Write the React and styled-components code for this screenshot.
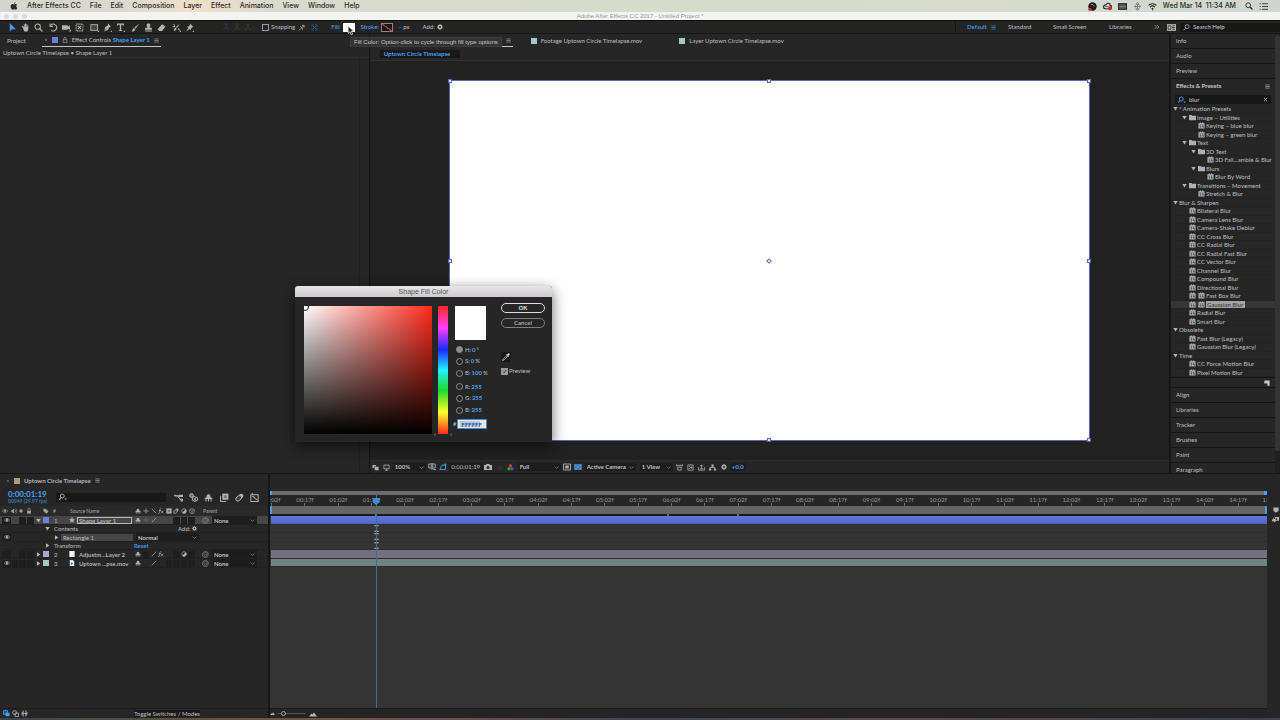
import React from 'react';
import styled, { createGlobalStyle, css } from 'styled-components';

const colors = {
  panel: '#262626',
  bar: '#242424',
  canvas: '#212121',
  line: '#161616',
  field: '#181818',
  text: '#b6b6b6',
  blue: '#45a0f2',
  icon: '#b0b0b0',
};

const GlobalStyle = createGlobalStyle`
  * {
    box-sizing: border-box;
  }
  body {
    margin: 0;
    background: #161616;
    color: ${colors.text};
    font-family: Lato, 'Open Sans', sans-serif;
    font-size: 6px;
    font-weight: 500;
    line-height: 8px;
    overflow: hidden;
  }
  button, input, select {
    margin: 0;
    padding: 0;
    border: none;
    border-radius: 0;
    background: transparent;
    color: inherit;
    font: inherit;
    line-height: inherit;
    outline: none;
  }
`;

/* ---------- icons ---------- */

const line = { fill: 'none', stroke: 'currentColor', strokeWidth: 1.8 };

const glyphs = {
  apple: (
    <path d="M11 0.5c.2 1.700-1.300 3.300-2.900 3.300C8 2.200 9.400.8 11 .5zM8.200 4.800c.7 0 1.700-.9 3.200-.8 1.200.1 2.200.6 2.800 1.500-2.500 1.600-2 4.900.5 5.900-.7 1.900-2 4.100-3.400 4.100-1.200 0-1.600-.8-3-.8s-1.900.8-3 .8C3.200 15.500.8 10.800 1.300 8c.4-2.700 2.300-4 4-4 1.300 0 2.200.8 2.900.8z" />
  ),
  arrow: <path d="M3 0v15l4-4 7 0z" />,
  hand: (
    <path d="M3 8L1 6l1.500-1L5 7V2h1.600v4.500h.6V.8h1.700v5.700h.6V1.800H11v5h.6V4H13v6c0 3-1.500 5.500-4.500 5.500S4.500 12 3 8z" />
  ),
  zoom: (
    <g {...line}>
      <circle cx="6.500" cy="6.500" r="4.800" />
      <path d="M10 10l5 5" strokeWidth="2.200" />
    </g>
  ),
  rotate: (
    <g {...line}>
      <path d="M3 4a6 6 0 1 1 1 9" />
      <path d="M2 1v5h5" />
    </g>
  ),
  camera: <path d="M0 4h10v2l4-2v8l-4-2v2H0zM12 15h4v-4z" />,
  anchor: (
    <g {...line} strokeDasharray="2.500 1.500">
      <rect x="2" y="2" width="12" height="12" />
      <path d="M5 5l6 6M11 5l-6 6" strokeDasharray="none" />
    </g>
  ),
  rect: (
    <g>
      <rect x="1.500" y="3" width="12" height="10" fill="#444" stroke="currentColor" strokeWidth="1.600" />
      <path d="M13 16h3v-3z" />
    </g>
  ),
  pen: <path d="M9 1l5 5-3 2-2 4-7 3 4-5-1 0-3 4 2-7 4-2zM13 16h3v-3z" />,
  type: <path d="M2 1h12v4h-1.500c0-1.500-.5-2-2-2H9.200v9.500l2 .7V14H5v-.8l1.800-.7V3H5.500c-1.500 0-2 .5-2 2H2zM13 16h3v-3z" />,
  brush: <path d="M15 1L8 10l-2-2zM5 9l2.500 2.500C7 14 4 15.500 1 15c1.500-1 1.500-5 4-6z" />,
  stamp: <path d="M6 7c-2-2-2-6 2-6s4 4 2 6v1.500h4V12H2V8.500h4zM2 13.500h12V15H2z" />,
  eraser: <path d="M9 2l6 4-6 8H4l-3-3z" />,
  roto: (
    <g>
      <path d="M14 1L9 9 7 7zM6 8l2 2c0 2-2 4-5 4 1-2 1-5 3-6z" />
      <path d="M3 2l2 4M1 6l4 1M11 10l3 3" {...line} />
      <path d="M13 16h3v-3z" />
    </g>
  ),
  pin: <path d="M9 1l6 6-2 .5-2.500 2.500.5 3-3-2.500L2 15l4-6.500L3.500 6l3 .3L9 3.500zM13 16h3v-3z" />,
  axis: <path d="M8 1v8M8 9l-6 5M8 9l6 5M6 3l2-2 2 2" {...line} />,
  snap: <path d="M2 15l6-6M9 3l5 0 0 5M5 5l4 4M11 13l-2-4M9 9l4-5" {...line} />,
  expand: (
    <g {...line}>
      <path d="M2 6V2h4M10 2h4v4M14 10v4h-4M6 14H2v-4" strokeDasharray="2 1" />
      <path d="M4 4l8 8M12 4l-8 8" />
    </g>
  ),
  gear: (
    <g>
      <circle cx="8" cy="8" r="4.500" fill="none" stroke="currentColor" strokeWidth="3.800" />
      <path
        d="M8 0v3M8 13v3M0 8h3M13 8h3M2.500 2.500l2 2M11.500 11.500l2 2M13.500 2.500l-2 2M4.500 11.500l-2 2"
        stroke="currentColor"
        strokeWidth="1.800"
      />
    </g>
  ),
  menu: <path d="M1 3h14M1 8h14M1 13h14" {...line} />,
  close: <path d="M3 3l10 10M13 3L3 13" {...line} strokeWidth="2.400" />,
  lock: <path d="M3 7h10v8H3zM5 7V4a3 3 0 0 1 6 0v1" stroke="currentColor" strokeWidth="1.600" fill="none" />,
  lockFull: (
    <g>
      <path d="M3 7h10v8H3z" />
      <path d="M5 7V4a3 3 0 0 1 6 0v3" {...line} />
    </g>
  ),
  more: <path d="M2 3l5 5-5 5M8 3l5 5-5 5" {...line} />,
  panelCard: (
    <g>
      <path d="M0 2h16v12H0z" />
      <path d="M2 5h5v6H2zM9 5h5M9 8h5M9 11h5" fill="none" stroke="#333" strokeWidth="1.400" />
    </g>
  ),
  searchLeft: (
    <g {...line}>
      <circle cx="9.500" cy="6" r="4.500" />
      <path d="M6 9.500L1 14.500" strokeWidth="2.200" />
    </g>
  ),
  searchDrop: (
    <g {...line}>
      <circle cx="6.500" cy="6" r="4" />
      <path d="M4 9l-3.500 4.500" strokeWidth="2.200" />
      <path d="M10.500 11h5.500l-2.700 3z" fill="currentColor" stroke="none" />
    </g>
  ),
  folder: <path d="M0 2h6l1.500 2H16v10H0z" />,
  effect: (
    <g>
      <path d="M1 3h3V1h3v2h2V1h3v2h3v12H1z" />
      <path d="M4 7h3M9 7h3M4 10h2v3M9 10h3v3" fill="none" stroke="#222" strokeWidth="1.500" />
    </g>
  ),
  page: <path d="M1 1h14v14H9V9H1z" />,
  down: <path d="M1 3h14L8 14z" />,
  right: <path d="M3 1v14l11-7z" />,
  chevron: <path d="M2 5l6 6 6-6" {...line} strokeWidth="2" />,
  layers: <path d="M1 2h8v3H5v4H1zM6 6h9v8H6z" />,
  monitor: <path d="M2 2.500h12v8.500H2zM5 14.500h6M8 11v3" {...line} />,
  resolution: <path d="M1.500 2h13v8h-13zM8 0v14M5 6h6M11 13h5" {...line} />,
  mask: <path d="M3 13c0-6 2-9 5-9h5v9zM1 13h4M11 4h4M13 1v6" {...line} />,
  snapshot: (
    <g>
      <path d="M0 4h4l1-2h6l1 2h4v10H0z" />
      <circle cx="8" cy="9" r="3" fill="#262626" />
    </g>
  ),
  clip: <path d="M4 12L12 4M2 10l5-5M8 14l6-6" {...line} />,
  channels: (
    <g>
      <circle cx="8" cy="4.500" r="3.800" fill="#d83a34" />
      <circle cx="4.500" cy="11" r="3.800" fill="#2fae3c" />
      <circle cx="11.500" cy="11" r="3.800" fill="#3b55d8" />
    </g>
  ),
  roi: (
    <g>
      <path d="M1 2h14v12H1z" {...line} />
      <path d="M4.500 5h7v6h-7z" />
    </g>
  ),
  grid: (
    <g>
      <path d="M0 2h16v12H0z" fill="#2a5f9e" />
      <path d="M2 4l12 8M14 4L2 12M2 4h12v8H2z" {...line} stroke="#6fb2ee" strokeWidth="1.200" />
    </g>
  ),
  aspect: <path d="M1 3h14M3 7h10M4 7v7h8V7M1 1v4M15 1v4" {...line} />,
  fast: <path d="M2 2h12v12H2zM5 5l3 3-3 3M8 8h4M10 5v6" {...line} />,
  render: <path d="M1 7v7h14V7M8 11V2M5 5l3-3 3 3M4 11h8" {...line} />,
  flow: (
    <g>
      <path d="M5.500 1h5v5h-5zM0 10h5v5H0zM11 10h5v5h-5z" />
      <path d="M8 5v3M2.500 11V8h11v3" {...line} />
    </g>
  ),
  eye: (
    <g>
      <path d="M1 8c3-5 11-5 14 0-3 5-11 5-14 0z" {...line} />
      <circle cx="8" cy="8" r="2.800" />
    </g>
  ),
  speaker: (
    <g>
      <path d="M1 5h3l4-4v14l-4-4H1z" />
      <path d="M10 4c3 2 3 6 0 8M12 1.500c5 4 5 9 0 13" {...line} />
    </g>
  ),
  dot: <circle cx="8" cy="8" r="4.500" />,
  tag: <path d="M1 2h6l8 7-6 6-8-7z" />,
  star: <path d="M8 0l2.300 5.400 5.700.5-4.300 3.800 1.300 5.800L8 12.500l-5 3 1.300-5.800L0 5.900l5.700-.5z" />,
  solid: <path d="M1 0h14v16H1z" fill="#f4f4f4" />,
  file: (
    <g>
      <path d="M2 0h8l4 4v12H2z" fill="#dfe6ee" />
      <path d="M5 6l6 3.500L5 13z" fill="#2767a8" />
    </g>
  ),
  shy: (
    <g>
      <path d="M4 8c0-8 8-8 8 0l3 1v2H1V9z" />
      <path d="M3.500 11v4M8 10v5M12.500 11v4" {...line} />
    </g>
  ),
  sun: (
    <g {...line}>
      <circle cx="8" cy="8" r="3" />
      <path d="M8 1v3M8 12v3M1 8h3M12 8h3" />
    </g>
  ),
  back: <path d="M2 2l12 12" {...line} />,
  slash: <path d="M14 2L2 14" {...line} />,
  fx: <path d="M1 15c3 1 3-4 4-9 0-4 2-5 4-4M2 7h6M8 7l6 7M14 7l-6 7" {...line} />,
  film: (
    <g>
      <path d="M1 1h14v14H1z" />
      <path d="M5 5h6v6H5z" fill="#777" />
    </g>
  ),
  blurred: (
    <g>
      <ellipse cx="9.500" cy="6.500" rx="6" ry="4" transform="rotate(-45 9.500 6.500)" />
      <ellipse cx="6.500" cy="9.500" rx="6" ry="4" transform="rotate(-45 6.500 9.500)" fill="#444" stroke="currentColor" strokeWidth="1.600" />
    </g>
  ),
  adjust: (
    <g>
      <circle cx="8" cy="8" r="6" {...line} />
      <path d="M12.500 3.500a6.300 6.300 0 0 1-9 9z" />
    </g>
  ),
  cube: <path d="M8 1l6 3.500v7L8 15l-6-3.500v-7zM2 4.500L8 8l6-3.500M8 8v7" {...line} strokeWidth="1.500" />,
  whip: (
    <g {...line} strokeWidth="1.500">
      <path d="M8 8c1-2 4 0 2.500 2.500S4 12 4 8s4-5.500 7-3.500 4 6 1.500 8.500S4 15.500 2 12 1 3 6 1.500 15 4 14.500 8" />
    </g>
  ),
  miniFlow: (
    <g>
      <path d="M0 3h3l3 3-3 0zM9 3h7v4H9zM11 10h5v5h-4z" />
      <path d="M0 5h10M6 5l6 7" {...line} />
    </g>
  ),
  draft: (
    <g>
      <circle cx="4.500" cy="4.500" r="3.500" fill="#777" stroke="currentColor" strokeWidth="1.500" />
      <path d="M9 6l6 2.500v4L10.500 15 6 12.500v-4z" {...line} />
      <circle cx="10.500" cy="10.500" r="1.800" />
    </g>
  ),
  blend: (
    <g>
      <path d="M4 1h11v11H4z" />
      <path d="M1 5v10h10" {...line} />
      <path d="M7 4h5v5H7z" fill="#777" />
    </g>
  ),
  graph: (
    <g {...line}>
      <path d="M1.500 3h13v12h-13z" />
      <path d="M4 6c5 0 4 6 9 6M3 0l3 3" />
    </g>
  ),
  marker: <path d="M1 1h14v9l-7 5-7-5z" />,
  mixer: (
    <g>
      <path d="M0 9l4-5v3h3V2h9v9H9l-3 4-2-3H0z" />
      <circle cx="10" cy="7" r="2" fill="#262626" />
    </g>
  ),
  panes: (
    <g>
      <path d="M1 1h9v9H1z" fill="#1d5796" stroke="currentColor" strokeWidth="1.800" />
      <path d="M6 6h9v8H6z" />
    </g>
  ),
  shapes: (
    <g {...line}>
      <circle cx="6" cy="6" r="4.500" />
      <path d="M7 7h8v8H7z" />
    </g>
  ),
  braces: <path d="M1 8h14M5 1v14M11 1v14M3 4v8M13 4v8" {...line} />,
  hill: <path d="M0 13l5-6 2 2 3-4 6 8z" />,
  eyedropper: (
    <g>
      <path d="M10 5l1.500 1.500L4 14l-3 1 1-3z" fill="none" stroke="#c8c8c8" strokeWidth="1.500" />
      <path d="M8 3l5 5 .8-.8-1-1L15 4c1.500-2-1-4.500-3-3l-2.200 2.200-1-1z" fill="#c8c8c8" />
    </g>
  ),
  tick: <path d="M3 8l4 4 6-9" {...line} strokeWidth="2.400" />,
  record: (
    <g>
      <circle cx="8" cy="8" r="7.500" fill="#1c1c1c" />
      <path d="M5 5c3-2 5 0 6 3" fill="none" stroke="#aaa" strokeWidth="1.500" />
      <circle cx="3.500" cy="13" r="3" fill="#e0281e" />
    </g>
  ),
  cloud: (
    <g>
      <path d="M1 9c0-4 3-4 4-4 2-4 8-3 8 1 3 0 3 5 0 6H4c-2 0-3-1-3-3z" fill="none" stroke="#333" strokeWidth="2.200" />
      <path d="M4 8c2-2 4 2 6 0" fill="none" stroke="#333" strokeWidth="1.500" />
      <circle cx="12.500" cy="11" r="3.500" fill="#e0281e" />
    </g>
  ),
  stack: (
    <g>
      <path d="M0 2h16v12H0z" />
      <path d="M2 5.500h12M2 8h12M2 10.500h12" stroke="#bbb" strokeWidth="1" />
    </g>
  ),
  drive: <path d="M8 1l3 3H5zM8 15l3-3H5zM2 8h12M4 6v4M12 6v4M8 4v8" fill="none" stroke="#777" strokeWidth="1.500" />,
  wifi: (
    <g fill="none" stroke="currentColor" strokeWidth="2">
      <path d="M1 6c4-4 10-4 14 0M3.500 9c3-2.700 6-2.700 9 0M6.500 12c1-1 2-1 3 0" />
      <path d="M7 14h2" />
    </g>
  ),
  list: <path d="M1 3h2M5 3h11M1 8h2M5 8h11M1 13h2M5 13h11" {...line} strokeWidth="1.500" />,
  pointer: <path d="M2 0v13l3.200-2.800L7.500 15.500 10 14.300 7.600 9.500H12z" fill="#1a1a1a" stroke="#fff" strokeWidth="1.200" />,
  cursorRange: <path d="M3 1.500h10M3 14.500h10M8 1.500v13" fill="none" stroke="currentColor" strokeWidth="2.400" />,
};

const Svg = styled.svg`
  display: block;
  flex: none;
  width: ${({ $size }) => $size}px;
  height: ${({ $size }) => $size}px;
  color: ${({ $color }) => $color || 'inherit'};
`;

function Icon({ name, size = 7, color }) {
  return (
    <Svg viewBox="0 0 16 16" fill="currentColor" aria-hidden="true" $size={size} $color={color}>
      {glyphs[name]}
    </Svg>
  );
}

/* ---------- shell ---------- */

const Screen = styled.div`
  position: relative;
  display: flex;
  flex-direction: column;
  height: 100vh;
`;

const MenuBar = styled.nav`
  display: flex;
  align-items: center;
  flex: none;
  height: 12px;
  padding: 0 12px 0 10px;
  background: linear-gradient(90deg, #d3d5ce, #dcdad0 10%, #f2dfc9 15%, #dadbce 21%, #d5dbcc 60%, #d9dccd 75%, #cfd6cf);
  color: #2a2a2a;
  font-family: Inter, 'Liberation Sans', sans-serif;
  font-size: 7px;
`;

const MenuItem = styled.button`
  margin-left: 9px;
  white-space: nowrap;
`;

const MenuStatus = styled.div`
  display: flex;
  align-items: center;
  gap: 6px;
  margin-left: auto;
`;

const Clock = styled.time`
  margin: 0 3px 0 0;
  white-space: pre;
`;

const TitleBar = styled.header`
  display: grid;
  grid-template-columns: 1fr auto 1fr;
  align-items: center;
  flex: none;
  height: 8px;
  background: #f3f4f2;
  color: #989898;
  font-family: 'Liberation Sans', Arial, sans-serif;
  font-size: 6px;
`;

const Lights = styled.div`
  display: flex;
  gap: 4px;
  padding-left: 4px;

  span {
    width: 5px;
    height: 5px;
    border-radius: 50%;
    background: #dcdcdc;
  }
`;

const Toolbar = styled.div`
  display: flex;
  align-items: center;
  flex: none;
  height: 14px;
  padding-left: 6px;
  border-top: 1px solid #0e0e0e;
  border-bottom: 1px solid ${colors.line};
  background: ${colors.bar};
  white-space: nowrap;
`;

const ToolGroup = styled.div`
  display: flex;
  margin-right: 2px;
  margin-left: ${({ $before = 0 }) => $before}px;
`;

const ToolButton = styled.button`
  display: flex;
  align-items: center;
  justify-content: center;
  width: ${({ $width = 13 }) => $width}px;
  height: 11px;
  color: ${({ $color }) => $color || '#b4b4b4'};
`;

const Option = styled.label`
  display: flex;
  align-items: center;
  gap: 2px;
  margin-left: ${({ $before = 0 }) => $before}px;
  color: ${({ $blue }) => ($blue ? colors.blue : 'inherit')};
`;

const CheckBox = styled.input.attrs({ type: 'checkbox' })`
  appearance: none;
  width: 7px;
  height: 7px;
  border: 1px solid #9a9a9a;
`;

const Swatch = styled.button`
  width: 12px;
  height: 9px;
  border: 1px solid ${({ $none }) => ($none ? '#8c8684' : '#fff')};
  background: ${({ $none }) =>
    $none
      ? 'linear-gradient(to top right, #161616 44%, #b83a34 45%, #b83a34 55%, #161616 56%)'
      : '#fff'};
`;

const Workspaces = styled.div`
  display: flex;
  align-items: center;
  margin-left: auto;
  height: 12px;
  padding-left: 11px;
  border-left: 1px solid ${colors.line};
`;

const WorkspaceTab = styled.button`
  width: ${({ $width }) => $width}px;
  text-align: left;
  color: ${({ $active }) => ($active ? colors.blue : 'inherit')};
`;

const SearchField = styled.label`
  display: flex;
  align-items: center;
  gap: 3px;
  width: ${({ $width }) => ($width ? `${$width}px` : 'auto')};
  height: 9px;
  padding: 0 3px;
  background: ${colors.field};

  input {
    flex: 1;
    min-width: 0;
    color: #c4c4c4;
  }
  input::placeholder {
    color: #c0c0c0;
    opacity: 1;
  }
`;

const Main = styled.main`
  display: flex;
  flex: 1;
  min-height: 0;
`;

const Panel = styled.section`
  display: flex;
  flex-direction: column;
  min-width: 0;
  background: ${colors.panel};
`;

const ControlsPanel = styled(Panel)`
  flex: 369 1 0;
`;

const CompPanel = styled(Panel)`
  flex: 800 1 0;
  margin: 0 2px 0 1px;
`;

const TabStrip = styled.div`
  display: flex;
  align-items: stretch;
  flex: none;
  height: 14px;
  padding-left: ${({ $start = 0 }) => $start}px;
  white-space: nowrap;
`;

const Tab = styled.div`
  display: flex;
  align-items: center;
  gap: 4px;
  width: ${({ $width }) => ($width ? `${$width}px` : 'auto')};
  height: 13px;
  padding: 0 2px;
  margin-left: ${({ $before = 0 }) => $before}px;
  ${({ $active }) =>
    $active &&
    css`
      border-bottom: 1px solid #c4c4c4;
    `}

  b {
    color: ${colors.blue};
    font-weight: 700;
  }
  > svg:last-child {
    margin-left: auto;
  }
`;

const TabSquare = styled.span`
  width: 6px;
  height: 6px;
  background: ${({ $color }) => $color};
`;

const SourceLine = styled.div`
  height: 10px;
  padding: 1px 3px;
  border-bottom: 1px solid #2e2e2e;
`;

const ControlsBody = styled.div`
  flex: 1;
  margin-right: 9px;
  border-right: 1px solid #202020;
`;

const Crumbs = styled.div`
  display: flex;
  align-items: center;
  flex: none;
  height: 13px;
  padding: 0 10px;
  border-bottom: 1px solid #303030;
`;

const Crumb = styled.button`
  width: 80px;
  padding-left: 4px;
  background: ${colors.field};
  color: ${colors.blue};
  font-weight: 700;
  text-align: left;
`;

const Stage = styled.div`
  flex: 1;
  display: flex;
  min-height: 0;
  padding: 19px 79px;
  background: ${colors.canvas};
`;

const Shape = styled.div`
  position: relative;
  flex: 1;
  border: 1px solid #5a66b8;
  background: #fff;
`;

const Handle = styled.span`
  position: absolute;
  left: ${({ $x }) => $x}%;
  top: ${({ $y }) => $y}%;
  width: 4px;
  height: 4px;
  margin: -2px;
  border: 1px solid #5a66b8;
  background: #dfe2f6;
  ${({ $center }) =>
    $center &&
    css`
      background: #fff;
      transform: rotate(45deg);
    `}
`;

const ViewerBar = styled.div`
  display: flex;
  align-items: center;
  flex: none;
  height: 13px;
  border-top: 1px solid #2c2c2c;
  white-space: nowrap;
`;

const ViewerButton = styled.button`
  display: flex;
  justify-content: center;
  width: 11px;
  margin-left: ${({ $before = 0 }) => $before}px;
  color: ${({ $color }) => $color || '#b0b0b0'};
`;

const ViewerValue = styled.button`
  width: ${({ $width }) => $width}px;
  background: #1d1d1d;
  color: ${({ $blue }) => ($blue ? colors.blue : '#b0b0b0')};
  font-weight: ${({ $blue }) => ($blue ? 700 : 500)};
`;

const SelectBox = styled.span`
  display: grid;
  align-items: center;
  width: ${({ $width }) => $width}px;
  margin-left: ${({ $before = 0 }) => $before}px;
  background: #1d1d1d;
  color: #c0c0c0;

  select,
  svg {
    grid-area: 1 / 1;
  }
  select {
    appearance: none;
    width: 100%;
    height: 8px;
    padding-left: 2px;
    font-weight: 700;
  }
  svg {
    justify-self: end;
    margin-right: 2px;
    pointer-events: none;
  }
`;

function Select({ label, value, width, before }) {
  return (
    <SelectBox $width={width} $before={before}>
      <select aria-label={label} defaultValue={value}>
        <option>{value}</option>
      </select>
      <Icon name="chevron" size={5} color="#9a9a9a" />
    </SelectBox>
  );
}

/* ---------- side column ---------- */

const SideColumn = styled.aside`
  display: flex;
  flex: 0 0 109px;
  min-height: 0;
  background: ${colors.panel};
  overflow: hidden;
`;

const SideStack = styled.div`
  display: flex;
  flex-direction: column;
  flex: 1;
  min-width: 0;
`;

const SideTitle = styled.button`
  display: flex;
  align-items: center;
  justify-content: space-between;
  flex: none;
  height: 15px;
  padding: 0 5px;
  border-bottom: 1px solid ${colors.line};
  text-align: left;
  ${({ $open }) =>
    $open &&
    css`
      border-color: transparent;
      color: #cacaca;
      font-weight: 700;
    `}
`;

const SideSearch = styled(SearchField)`
  flex: none;
  margin: 1px 4px;
`;

const ClearButton = styled.button`
  display: flex;
  color: #c0c0c0;
`;

const EffectTree = styled.div`
  display: grid;
  grid-auto-rows: 1fr;
  flex: 1;
  min-height: 0;
  overflow: hidden;
`;

const EffectRow = styled.div`
  display: flex;
  align-items: center;
  gap: 1px;
  min-height: 0;
  padding-left: ${({ $depth }) => 1 + $depth * 9}px;
  border-bottom: 1px solid #232323;
  background: ${({ $selected }) => ($selected ? '#363636' : 'transparent')};
  line-height: 7px;
  white-space: nowrap;
`;

const Twist = styled.span`
  display: flex;
  justify-content: center;
  width: 6px;
  color: #b4b4b4;
`;

const IconSlot = styled.span`
  display: flex;
  width: 8px;
  padding-left: 1px;
  color: #b0b0b0;
`;

const EffectName = styled.span`
  ${({ $selected }) =>
    $selected &&
    css`
      padding: 0 2px 0 1px;
      background: #a4a4a4;
      color: #3a3a3a;
    `}
`;

const TreeFooter = styled.div`
  display: flex;
  align-items: center;
  justify-content: flex-end;
  flex: none;
  height: 11px;
  padding-right: 5px;
  border-top: 1px solid ${colors.line};
  border-bottom: 1px solid ${colors.line};
`;

const SideTail = styled.div`
  display: flex;
  flex-direction: column;
  flex: 0 0 85px;
  overflow: hidden;
`;

const ScrollRail = styled.div`
  flex: 0 0 5px;
  padding-top: 1px;
  background: #1f1f1f;

  &::before {
    content: '';
    display: block;
    height: 95%;
    border-radius: 2px;
    background: #343434;
  }
`;

const effects = [
  [0, '* Animation Presets', 'open'],
  [1, 'Image – Utilities', 'folder'],
  [2, 'Keying – blue blur'],
  [2, 'Keying – green blur'],
  [1, 'Text', 'folder'],
  [2, '3D Text', 'folder'],
  [3, '3D Fall...amble & Blur'],
  [2, 'Blurs', 'folder'],
  [3, 'Blur By Word'],
  [1, 'Transitions – Movement', 'folder'],
  [2, 'Stretch & Blur'],
  [0, 'Blur & Sharpen', 'open'],
  [1, 'Bilateral Blur'],
  [1, 'Camera Lens Blur'],
  [1, 'Camera-Shake Deblur'],
  [1, 'CC Cross Blur'],
  [1, 'CC Radial Blur'],
  [1, 'CC Radial Fast Blur'],
  [1, 'CC Vector Blur'],
  [1, 'Channel Blur'],
  [1, 'Compound Blur'],
  [1, 'Directional Blur'],
  [1, 'Fast Box Blur', 'gpu'],
  [1, 'Gaussian Blur', 'gpu', true],
  [1, 'Radial Blur'],
  [1, 'Smart Blur'],
  [0, 'Obsolete', 'open'],
  [1, 'Fast Blur (Legacy)'],
  [1, 'Gaussian Blur (Legacy)'],
  [0, 'Time', 'open'],
  [1, 'CC Force Motion Blur'],
  [1, 'Pixel Motion Blur'],
];

function EffectsColumn() {
  return (
    <SideColumn>
      <SideStack>
        {['Info', 'Audio', 'Preview'].map(name => (
          <SideTitle key={name}>{name}</SideTitle>
        ))}
        <SideTitle $open>
          Effects &amp; Presets
          <Icon name="menu" size={5} />
        </SideTitle>
        <SideSearch>
          <Icon name="searchDrop" size={8} color={colors.blue} />
          <input aria-label="Search effects" defaultValue="blur" />
          <ClearButton aria-label="Clear search">
            <Icon name="close" size={5} />
          </ClearButton>
        </SideSearch>
        <EffectTree>
          {effects.map(([depth, name, kind, selected]) => (
            <EffectRow key={name} $depth={depth} $selected={selected}>
              <Twist>{(kind === 'open' || kind === 'folder') && <Icon name="down" size={5} />}</Twist>
              {kind !== 'open' && (
                <IconSlot>
                  <Icon name={kind === 'folder' ? 'folder' : 'effect'} size={7} />
                </IconSlot>
              )}
              {kind === 'gpu' && (
                <IconSlot>
                  <Icon name="effect" size={7} />
                </IconSlot>
              )}
              <EffectName $selected={selected}>{name}</EffectName>
            </EffectRow>
          ))}
        </EffectTree>
        <TreeFooter>
          <Icon name="page" size={6} color="#c8c8c8" />
        </TreeFooter>
        <SideTail>
          {['Align', 'Libraries', 'Tracker', 'Brushes', 'Paint', 'Paragraph'].map(name => (
            <SideTitle key={name}>{name}</SideTitle>
          ))}
        </SideTail>
      </SideStack>
      <ScrollRail />
    </SideColumn>
  );
}

/* ---------- timeline ---------- */

const Timeline = styled.section`
  display: flex;
  flex: none;
  height: 245px;
  border-top: 1px solid ${colors.line};
  background: ${colors.panel};
`;

const LayerSide = styled.div`
  display: flex;
  flex-direction: column;
  flex: 0 0 270px;
  border-right: 2px solid ${colors.line};
`;

const TimeControls = styled.div`
  display: flex;
  align-items: center;
  flex: none;
  height: 18px;
  padding-left: 8px;
`;

const TimeCode = styled.button`
  width: 48px;
  color: ${colors.blue};
  font-size: 8px;
  font-weight: 700;
  text-align: left;

  small {
    display: block;
    color: #3278b8;
    font-size: 5px;
    line-height: 6px;
    white-space: nowrap;
  }
`;

const TimelineTools = styled.div`
  display: flex;
  justify-content: space-between;
  flex: 1;
  padding: 0 9px 0 8px;
  color: ${colors.icon};
`;

const layerGrid = css`
  display: grid;
  grid-template-columns: 9px 7px 8px 8px 9px 8px 16px 67px 61px 1fr;
  align-items: center;
  padding-left: 2px;
`;

const ColumnHeads = styled.div`
  ${layerGrid}
  flex: none;
  height: 10px;
  background: #2a2a2a;
  color: #a0a0a0;
  font-size: 5px;
`;

const LayerRows = styled.div`
  display: grid;
  grid-auto-rows: 1fr;
  flex: none;
  height: 51px;
`;

const LayerRow = styled.div`
  ${layerGrid}
  background: ${({ $selected }) => ($selected ? '#464646' : 'transparent')};
  border-bottom: 1px solid #212121;
  line-height: 7px;
  white-space: nowrap;
`;

const Cell = styled.span`
  display: flex;
  align-items: center;
  justify-content: ${({ $left }) => ($left ? 'flex-start' : 'center')};
  height: 7px;
  padding-left: ${({ $pad = 0 }) => $pad}px;
  background: ${({ $box }) => ($box ? '#1e1e1e' : 'transparent')};
  background-clip: content-box;
`;

const LabelColor = styled.span`
  width: 6px;
  height: 6px;
  background: ${({ $color }) => $color};
`;

const LayerName = styled.span`
  display: flex;
  align-items: center;
  gap: 2px;
  padding-left: 2px;
  color: #b0b0b0;
  font-weight: 700;

  span {
    flex: 1;
    padding-left: 1px;
    margin-right: 2px;
    border: 1px solid ${({ $selected }) => ($selected ? '#b8b8b8' : 'transparent')};
    line-height: 5px;
  }
`;

const Switches = styled.span`
  display: grid;
  grid-template-columns: repeat(8, 1fr);
  column-gap: 1px;
  padding-left: 1px;
  color: ${colors.icon};
`;

const ParentCell = styled.span`
  display: flex;
  align-items: center;
  padding-left: 7px;
`;

const PropertyRow = styled.div`
  display: grid;
  grid-template-columns: 9px 123px 1fr;
  align-items: center;
  padding-left: 2px;
  border-bottom: 1px solid #212121;
  line-height: 7px;
  white-space: nowrap;
`;

const PropertyName = styled.span`
  display: flex;
  align-items: center;
  gap: 2px;
  padding-left: ${({ $indent }) => $indent}px;

  span {
    flex: ${({ $selected }) => ($selected ? 1 : 'none')};
    padding: 0 2px;
    margin-right: 1px;
    background: ${({ $selected }) => ($selected ? '#464646' : 'transparent')};
  }
`;

const AddButton = styled.button`
  display: flex;
  align-items: center;
  gap: 2px;
  margin-left: ${({ $before = 0 }) => $before}px;
`;

const ResetButton = styled.button`
  color: ${colors.blue};
  text-align: left;
`;

const SideFooter = styled.footer`
  display: flex;
  align-items: center;
  gap: 2px;
  flex: none;
  height: 10px;
  margin-top: auto;
  padding-left: 3px;
  border-top: 1px solid #1c1c1c;
`;

const ModesButton = styled.button`
  width: 66px;
  margin-left: 104px;
  background: #191919;
  color: #b8b8b8;
  line-height: 7px;
  white-space: nowrap;
`;

const TrackSide = styled.div`
  position: relative;
  display: flex;
  flex-direction: column;
  flex: 1;
  min-width: 0;
`;

const NavigatorBar = styled.div`
  flex: none;
  height: 4px;
  margin: 17px 0 1px;
  border-left: 2px solid ${colors.blue};
  border-right: 3px solid ${colors.blue};
  background: #6c6c6c;
`;

const Ruler = styled.div`
  flex: none;
  height: 10px;
  overflow: hidden;
`;

const RulerMarks = styled.div`
  display: grid;
  grid-template-columns: repeat(31, 1fr);
  margin: 0 -21px 0 -15px;
`;

const RulerMark = styled.span`
  display: flex;
  flex-direction: column;
  align-items: center;
  min-width: 0;
  color: #929292;
  line-height: 7px;

  &::after {
    content: '';
    width: 1px;
    height: 3px;
    background: #6a6a6a;
  }
`;

const WorkArea = styled.div`
  flex: none;
  height: 8px;
  border-left: 2px solid ${colors.blue};
  border-right: 2px solid ${colors.blue};
  border-radius: 1px;
  background: #656565;
`;

const CacheBar = styled.div`
  position: relative;
  flex: none;
  height: 2px;
  background: #191919;
`;

const CacheMark = styled.span`
  position: absolute;
  left: ${({ $at }) => $at}%;
  width: 2px;
  height: 2px;
  background: #2f9a3a;
`;

const Tracks = styled.div`
  flex: 1;
  background: #343434;
`;

const TrackRows = styled.div`
  display: grid;
  grid-auto-rows: 1fr;
  height: 51px;
`;

const TrackRow = styled.div`
  display: flex;
  padding-left: 1px;
  border-bottom: 1px solid #2d2d2d;
`;

const TrackBar = styled.div`
  flex: 1;
  background: ${({ $color }) => $color};
`;

const KeyMark = styled.span`
  display: flex;
  align-items: center;
  width: 100%;
  padding-left: calc(10.6% - 4px);
  color: #b4bac4;
`;

const Playhead = styled.div`
  position: absolute;
  top: 17px;
  bottom: 10px;
  left: 10.6%;
  width: 1px;
  background: #3b6f9e;

  &::before {
    content: '';
    position: absolute;
    top: 7px;
    left: -3px;
    width: 7px;
    height: 7px;
    background: #3a8ddb;
    clip-path: polygon(0 0, 100% 0, 100% 60%, 50% 100%, 0 60%);
  }
`;

const TrackFooter = styled.footer`
  display: flex;
  align-items: center;
  gap: 3px;
  flex: none;
  height: 10px;
  border-top: 1px solid #1c1c1c;
  background: ${colors.bar};
`;

const ZoomRange = styled.input.attrs({ type: 'range' })`
  appearance: none;
  width: 28px;
  height: 6px;
  background: linear-gradient(#555, #555) center / 100% 1px no-repeat;

  &::-webkit-slider-thumb {
    appearance: none;
    width: 5px;
    height: 5px;
    border: 1px solid #a8a8a8;
    border-radius: 50%;
    background: ${colors.bar};
  }
`;

const TrackGutter = styled.div`
  display: flex;
  flex-direction: column;
  align-items: center;
  gap: 3px;
  flex: 0 0 13px;
  padding: 33px 0 0 4px;
  color: #b4b4b4;
`;

const rulerLabels = Array.from({ length: 31 }, (_, i) => {
  const seconds = String(Math.floor(i / 2)).padStart(2, '0');
  return `${seconds}:${i % 2 ? '17' : '02'}f`;
});

function Layer({ index, name, icon, color, switches, boxes, selected, open, hidden }) {
  return (
    <LayerRow $selected={selected}>
      <Cell $box>{!hidden && <Icon name="eye" size={6} color="#c0c0c0" />}</Cell>
      <Cell $box={index === 3} $pad={1} />
      <Cell $box $pad={1} />
      <Cell $box $pad={1} />
      <Cell>
        <Icon name={open ? 'down' : 'right'} size={5} />
      </Cell>
      <LabelColor $color={color} />
      <Cell $left $pad={3}>
        {index}
      </Cell>
      <LayerName $selected={selected}>
        <Icon name={icon} size={6} />
        <span>{name}</span>
      </LayerName>
      <Switches>
        {switches.map((item, i) => (
          <Cell key={i} $box={boxes.includes(i)}>
            {item && <Icon name={item} size={6} color={item === 'sun' ? '#6a6a6a' : undefined} />}
          </Cell>
        ))}
      </Switches>
      <ParentCell>
        <Icon name="whip" size={7} color="#8a8a8a" />
        <Select label={`Parent of ${name}`} value="None" width={45} before={3} />
      </ParentCell>
    </LayerRow>
  );
}

function TimelinePanel() {
  return (
    <Timeline>
      <LayerSide>
        <TabStrip $start={4}>
          <Tab>
            <Icon name="close" size={4} color="#777" />
            <TabSquare $color="#b09a76" />
            <strong>Uptown Circle Timelapse</strong>
            <Icon name="menu" size={5} />
          </Tab>
        </TabStrip>
        <TimeControls>
          <TimeCode>
            0:00:01:19
            <small>00049 (29.97 fps)</small>
          </TimeCode>
          <SearchField $width={110}>
            <Icon name="searchDrop" size={8} />
            <input aria-label="Search layers" />
          </SearchField>
          <TimelineTools>
            {['miniFlow', 'draft', 'shy', 'blend', 'blurred', 'graph'].map(name => (
              <Icon key={name} name={name} size={9} />
            ))}
          </TimelineTools>
        </TimeControls>
        <ColumnHeads>
          <Icon name="eye" size={6} />
          <Icon name="speaker" size={6} />
          <Icon name="dot" size={6} />
          <Icon name="lockFull" size={6} />
          <Cell />
          <Icon name="tag" size={6} />
          <Cell $left $pad={2}>
            #
          </Cell>
          <Cell $left $pad={3}>
            Source Name
          </Cell>
          <Switches>
            {['shy', 'sun', 'back', 'fx', 'film', 'blurred', 'adjust', 'cube'].map(name => (
              <Cell key={name}>
                <Icon name={name} size={6} />
              </Cell>
            ))}
          </Switches>
          <Cell $left $pad={8}>
            Parent
          </Cell>
        </ColumnHeads>
        <LayerRows>
          <Layer
            index={1}
            name="Shape Layer 1"
            icon="star"
            color="#6a80dc"
            switches={['shy', 'sun', 'slash', null, null, null, null, null]}
            boxes={[5, 6, 7]}
            selected
            open
          />
          <PropertyRow>
            <span />
            <PropertyName $indent={34}>
              <Icon name="down" size={5} />
              <span>Contents</span>
            </PropertyName>
            <AddButton $before={44}>
              Add:
              <Icon name="gear" size={5} />
            </AddButton>
          </PropertyRow>
          <PropertyRow>
            <Cell $box>
              <Icon name="eye" size={6} color="#c0c0c0" />
            </Cell>
            <PropertyName $indent={43} $selected>
              <Icon name="right" size={5} />
              <span>Rectangle 1</span>
            </PropertyName>
            <Select label="Blend mode" value="Normal" width={63} before={2} />
          </PropertyRow>
          <PropertyRow>
            <span />
            <PropertyName $indent={34}>
              <Icon name="right" size={5} />
              <span>Transform</span>
            </PropertyName>
            <ResetButton>Reset</ResetButton>
          </PropertyRow>
          <Layer
            index={2}
            name="Adjustm...Layer 2"
            icon="solid"
            color="#aaa8cc"
            switches={['shy', null, 'slash', 'fx', null, null, 'adjust', null]}
            boxes={[1, 5, 6, 7]}
            hidden
          />
          <Layer
            index={3}
            name="Uptown ...pse.mov"
            icon="file"
            color="#a4c8c4"
            switches={['shy', null, 'slash', null, null, null, null, null]}
            boxes={[4, 5, 6, 7]}
          />
        </LayerRows>
        <SideFooter>
          <Icon name="panes" size={7} color={colors.blue} />
          <Icon name="shapes" size={7} />
          <Icon name="braces" size={7} />
          <ModesButton>Toggle Switches / Modes</ModesButton>
        </SideFooter>
      </LayerSide>
      <TrackSide>
        <NavigatorBar />
        <Ruler>
          <RulerMarks>
            {rulerLabels.map(label => (
              <RulerMark key={label}>{label}</RulerMark>
            ))}
          </RulerMarks>
        </Ruler>
        <WorkArea />
        <CacheBar>
          {[10.5, 39.8, 46.8].map(at => (
            <CacheMark key={at} $at={at} />
          ))}
        </CacheBar>
        <Tracks>
          <TrackRows>
            <TrackRow>
              <TrackBar $color="linear-gradient(#6479d4, #4c65c4)" />
            </TrackRow>
            {[1, 2, 3].map(key => (
              <TrackRow key={key}>
                <KeyMark>
                  <Icon name="cursorRange" size={7} />
                </KeyMark>
              </TrackRow>
            ))}
            <TrackRow>
              <TrackBar $color="#737082" />
            </TrackRow>
            <TrackRow>
              <TrackBar $color="#6f8480" />
            </TrackRow>
          </TrackRows>
        </Tracks>
        <TrackFooter>
          <Icon name="hill" size={5} />
          <ZoomRange aria-label="Timeline zoom" defaultValue="15" />
          <Icon name="hill" size={8} />
        </TrackFooter>
        <Playhead />
      </TrackSide>
      <TrackGutter>
        <Icon name="marker" size={6} />
        <Icon name="mixer" size={7} />
      </TrackGutter>
    </Timeline>
  );
}

const DesktopEdge = styled.div`
  flex: none;
  height: 2px;
  background: linear-gradient(90deg, #38474a, #6a5640 20%, #6c4f52 35%, #3c474c 50%, #5c4a50 70%, #3a4348);
`;

/* ---------- overlays ---------- */

const Tooltip = styled.div`
  position: absolute;
  top: 37px;
  left: 350px;
  height: 10px;
  padding: 1px 3px;
  border: 1px solid #3e3e3e;
  background: #333;
  color: #c8c8c8;
  font-family: 'Liberation Sans', Arial, sans-serif;
  line-height: 7px;
  white-space: nowrap;
`;

const Pointer = styled.div`
  position: absolute;
  top: 26px;
  left: 347px;
`;

const Dialog = styled.form`
  position: absolute;
  top: 286px;
  left: 295px;
  width: 257px;
  border-radius: 3px 3px 0 0;
  background: #262626;
  box-shadow: 0 4px 14px rgba(0, 0, 0, 0.6);
  overflow: hidden;
`;

const DialogTitle = styled.h1`
  height: 11px;
  margin: 0;
  background: linear-gradient(#e8e5e8, #cdcacd);
  color: #555;
  font-family: 'Liberation Sans', Arial, sans-serif;
  font-size: 7px;
  font-weight: 400;
  line-height: 11px;
  text-align: center;
`;

const DialogBody = styled.div`
  display: flex;
  align-items: flex-start;
  padding: 9px 7px 5px 9px;
`;

const ColorField = styled.div`
  width: 128px;
  height: 128px;
  background:
    linear-gradient(transparent, #000),
    linear-gradient(90deg, #fff, #ff2a1a);
  overflow: hidden;

  &::before {
    content: '';
    display: block;
    width: 6px;
    height: 6px;
    margin: -3px;
    border: 1px solid #222;
    border-radius: 50%;
  }
`;

const HueColumn = styled.div`
  width: 22px;
  padding: 0 6px;
  color: #c0c0c0;
`;

const HueStrip = styled.div`
  height: 128px;
  background: linear-gradient(
    #ff2a1c,
    #ff40ff 17%,
    #1c28ff 34%,
    #22f2ff 50%,
    #1fd82c 66%,
    #ffff2e 83%,
    #ff2a1c
  );
`;

const HueArrows = styled.div`
  display: flex;
  justify-content: space-between;
  margin: -4px -4px 0;
  line-height: 7px;
`;

const FieldColumn = styled.div`
  display: flex;
  flex-direction: column;
  width: 38px;
  padding-left: 1px;
`;

const ColorPreview = styled.div`
  width: 31px;
  height: 34px;
  margin-bottom: 4px;
  background: #fff;
`;

const RadioGroup = styled.div`
  display: grid;
  grid-auto-rows: 1fr;
  height: 35px;
  margin-bottom: 2px;
`;

const RadioRow = styled.label`
  display: flex;
  align-items: center;
  gap: 1px;
  color: #b6b6b6;

  b {
    color: ${colors.blue};
    font-weight: 700;
  }
`;

const Radio = styled.input.attrs({ type: 'radio' })`
  appearance: none;
  width: 7px;
  height: 7px;
  margin: 0 1px;
  border: 1px solid #8e8e8e;
  border-radius: 50%;

  &:checked {
    background: #8e8e8e;
  }
`;

const HexRow = styled.label`
  display: flex;
  align-items: center;
  margin: 1px 0 0 -2px;

  input {
    width: 30px;
    height: 10px;
    margin-left: 1px;
    padding-left: 3px;
    border: 1px solid #4a8bd0;
    border-radius: 1px;
    background: linear-gradient(#a9cbf2, #a9cbf2) 2px 1px / 20px 6px no-repeat #e6e8ec;
    color: #24436a;
  }
`;

const ActionColumn = styled.div`
  display: flex;
  flex-direction: column;
  flex: 1;
  padding-left: 9px;
  margin-top: -3px;
`;

const PillButton = styled.button`
  height: 10px;
  margin-bottom: 5px;
  border: 1px solid ${({ $primary }) => ($primary ? '#dcdcdc' : '#7e7e7e')};
  border-radius: 5px;
  color: ${({ $primary }) => ($primary ? '#e4e4e4' : '#a8a8a8')};
  font-weight: 700;
`;

const DropperButton = styled.button`
  align-self: flex-start;
  padding: 1px;
  margin: 19px 0 5px;
  background: #181818;
`;

const PreviewToggle = styled.label`
  display: grid;
  grid-template-columns: 7px 1fr;
  align-items: center;
  column-gap: 1px;

  input,
  svg {
    grid-area: 1 / 1;
  }
  input {
    background: #9a9a9a;
  }
  svg {
    justify-self: center;
    color: #222;
    pointer-events: none;
  }
`;

const channelGroups = [
  [
    ['H:', '0', '°'],
    ['S:', '0', '%'],
    ['B:', '100', '%'],
  ],
  [
    ['R:', '255'],
    ['G:', '255'],
    ['B:', '255'],
  ],
];

function ColorDialog() {
  return (
    <Dialog onSubmit={event => event.preventDefault()}>
      <DialogTitle>Shape Fill Color</DialogTitle>
      <DialogBody>
        <ColorField />
        <HueColumn>
          <HueStrip />
          <HueArrows>
            <span>›</span>
            <span>‹</span>
          </HueArrows>
        </HueColumn>
        <FieldColumn>
          <ColorPreview />
          {channelGroups.map((group, g) => (
            <RadioGroup key={g}>
              {group.map(([label, value, unit], i) => (
                <RadioRow key={label}>
                  <Radio name="channel" defaultChecked={g + i === 0} />
                  <span>{label}</span>
                  <b>{value}</b>
                  <span>{unit}</span>
                </RadioRow>
              ))}
            </RadioGroup>
          ))}
          <HexRow>
            #<input defaultValue="FFFFFF" />
          </HexRow>
        </FieldColumn>
        <ActionColumn>
          <PillButton $primary>OK</PillButton>
          <PillButton type="button">Cancel</PillButton>
          <DropperButton type="button" aria-label="Pick colour">
            <Icon name="eyedropper" size={8} />
          </DropperButton>
          <PreviewToggle>
            <CheckBox defaultChecked />
            <Icon name="tick" size={5} />
            <span>Preview</span>
          </PreviewToggle>
        </ActionColumn>
      </DialogBody>
    </Dialog>
  );
}

/* ---------- page ---------- */

const menus = ['File', 'Edit', 'Composition', 'Layer', 'Effect', 'Animation', 'View', 'Window', 'Help'];

const toolGroups = [
  ['arrow', 'hand', 'zoom'],
  ['rotate', 'camera', 'anchor'],
  ['rect', 'pen', 'type'],
  ['brush', 'stamp', 'eraser'],
  ['roto', 'pin'],
];

const handles = [
  [0, 0],
  [50, 0],
  [100, 0],
  [0, 50],
  [100, 50],
  [0, 100],
  [50, 100],
  [100, 100],
];

export default function App() {
  return (
    <Screen>
      <GlobalStyle />
      <MenuBar>
        <Icon name="apple" size={8} />
        <MenuItem>After Effects CC</MenuItem>
        {menus.map(name => (
          <MenuItem key={name}>{name}</MenuItem>
        ))}
        <MenuStatus>
          {['record', 'cloud', 'stack', 'drive', 'wifi'].map(name => (
            <Icon key={name} name={name} size={9} />
          ))}
          <Clock>{'Wed Mar 14  11:34 AM'}</Clock>
          <Icon name="zoom" size={8} />
          <Icon name="list" size={9} />
        </MenuStatus>
      </MenuBar>
      <TitleBar>
        <Lights>
          <span />
          <span />
          <span />
        </Lights>
        Adobe After Effects CC 2017 - Untitled Project *
      </TitleBar>

      <Toolbar>
        {toolGroups.map(group => (
          <ToolGroup key={group[0]}>
            {group.map(name => (
              <ToolButton key={name} aria-label={name} $color={name === 'arrow' ? colors.blue : undefined}>
                <Icon name={name} size={9} />
              </ToolButton>
            ))}
          </ToolGroup>
        ))}
        <ToolGroup $before={22}>
          {['local', 'world', 'view'].map((name, i) => (
            <ToolButton key={name} aria-label={name} $width={11} $color={i ? '#404040' : '#25405c'}>
              <Icon name="axis" size={8} />
            </ToolButton>
          ))}
        </ToolGroup>
        <Option $before={7}>
          <CheckBox />
          Snapping
        </Option>
        <ToolButton aria-label="Snap edges">
          <Icon name="snap" size={7} />
        </ToolButton>
        <ToolButton aria-label="Snap features" $color="#2e6fae">
          <Icon name="expand" size={7} />
        </ToolButton>
        <Option $before={10} $blue>
          Fill: <Swatch aria-label="Fill" />
        </Option>
        <Option $before={6} $blue>
          Stroke: <Swatch $none aria-label="Stroke" />
        </Option>
        <Option $before={6}>
          <WorkspaceTab $active>-</WorkspaceTab> px
        </Option>
        <AddButton $before={13}>
          Add:
          <Icon name="gear" size={6} />
        </AddButton>
        <Workspaces>
          <WorkspaceTab $width={24} $active>
            Default
          </WorkspaceTab>
          <Icon name="menu" size={5} color={colors.blue} />
          <ToolGroup $before={12}>
            <WorkspaceTab $width={45}>Standard</WorkspaceTab>
            <WorkspaceTab $width={56}>Small Screen</WorkspaceTab>
            <WorkspaceTab $width={39}>Libraries</WorkspaceTab>
          </ToolGroup>
          <ToolButton aria-label="More workspaces">
            <Icon name="more" size={6} />
          </ToolButton>
          <ToolButton aria-label="Workspace panel" $width={17}>
            <Icon name="panelCard" size={9} />
          </ToolButton>
          <SearchField $width={100}>
            <Icon name="searchLeft" size={7} />
            <input aria-label="Search help" placeholder="Search Help" />
          </SearchField>
        </Workspaces>
      </Toolbar>

      <Main>
        <ControlsPanel>
          <TabStrip $start={5}>
            <Tab>Project</Tab>
            <Tab $before={14} $active>
              <Icon name="close" size={4} color="#777" />
              <TabSquare $color="#6a80dc" />
              <Icon name="lock" size={6} />
              <span>
                Effect Controls <b>Shape Layer 1</b>
              </span>
              <Icon name="menu" size={5} />
            </Tab>
          </TabStrip>
          <SourceLine>Uptown Circle Timelapse • Shape Layer 1</SourceLine>
          <ControlsBody />
        </ControlsPanel>
        <CompPanel>
          <TabStrip $start={4}>
            <Tab $width={139} $active>
              <Icon name="close" size={4} color="#777" />
              <TabSquare $color="#b09a76" />
              <Icon name="lock" size={6} />
              <Icon name="menu" size={5} />
            </Tab>
            <Tab $before={16}>
              <TabSquare $color="#a4c8c4" />
              Footage Uptown Circle Timelapse.mov
            </Tab>
            <Tab $before={33}>
              <TabSquare $color="#a4c8c4" />
              Layer Uptown Circle Timelapse.mov
            </Tab>
          </TabStrip>
          <Crumbs>
            <Crumb>Uptown Circle Timelapse</Crumb>
          </Crumbs>
          <Stage>
            <Shape>
              {handles.map(([x, y]) => (
                <Handle key={`${x}-${y}`} $x={x} $y={y} />
              ))}
              <Handle $x={50} $y={50} $center />
            </Shape>
          </Stage>
          <ViewerBar>
            <ViewerButton aria-label="Always preview">
              <Icon name="layers" size={7} />
            </ViewerButton>
            <ViewerButton aria-label="Primary viewer">
              <Icon name="monitor" size={7} />
            </ViewerButton>
            <Select label="Magnification" value="100%" width={33} before={1} />
            <ViewerButton aria-label="Grid and guides" $before={1}>
              <Icon name="resolution" size={8} />
            </ViewerButton>
            <ViewerButton aria-label="Mask visibility" $color={colors.blue}>
              <Icon name="mask" size={8} />
            </ViewerButton>
            <ViewerValue $width={34}>0:00:01:19</ViewerValue>
            <ViewerButton aria-label="Take snapshot">
              <Icon name="snapshot" size={8} />
            </ViewerButton>
            <ViewerButton aria-label="Show snapshot" $color="#444">
              <Icon name="clip" size={7} />
            </ViewerButton>
            <ViewerButton aria-label="Channels">
              <Icon name="channels" size={7} />
            </ViewerButton>
            <Select label="Resolution" value="Full" width={43} before={2} />
            <ViewerButton aria-label="Region of interest" $before={1}>
              <Icon name="roi" size={8} />
            </ViewerButton>
            <ViewerButton aria-label="Transparency grid">
              <Icon name="grid" size={8} />
            </ViewerButton>
            <Select label="3D view" value="Active Camera" width={51} before={1} />
            <Select label="View layout" value="1 View" width={33} before={4} />
            {['aspect', 'fast', 'render', 'flow'].map((name, i) => (
              <ViewerButton key={name} aria-label={name} $before={i ? 0 : 1}>
                <Icon name={name} size={7} />
              </ViewerButton>
            ))}
            <ViewerButton aria-label="Reset exposure" $before={1}>
              <Icon name="gear" size={6} />
            </ViewerButton>
            <ViewerValue $width={16} $blue>
              +0.0
            </ViewerValue>
          </ViewerBar>
        </CompPanel>
        <EffectsColumn />
      </Main>

      <TimelinePanel />
      <DesktopEdge />

      <Tooltip role="tooltip">Fill Color: Option-click to cycle through fill type options</Tooltip>
      <Pointer>
        <Icon name="pointer" size={9} />
      </Pointer>
      <ColorDialog />
    </Screen>
  );
}
